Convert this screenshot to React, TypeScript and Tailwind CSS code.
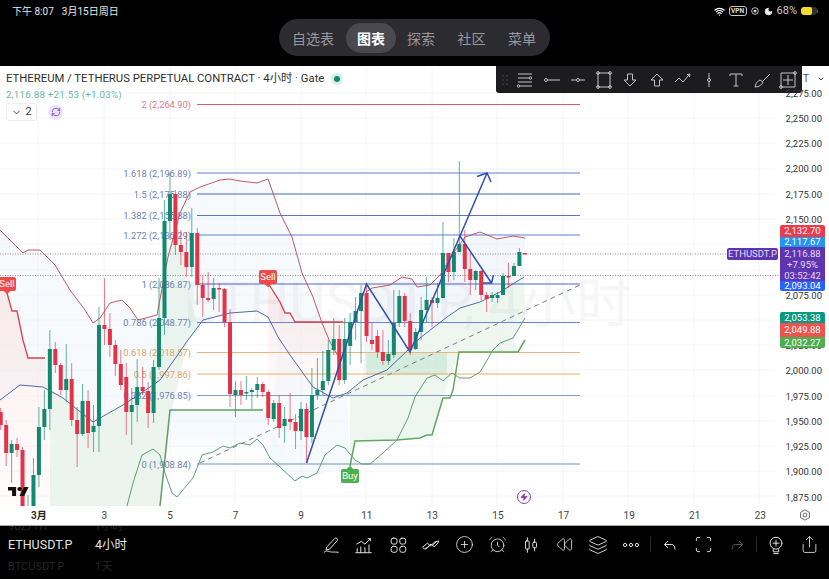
import { AlarmClock, ChevronDown, CirclePlus, Layers, Moon, RefreshCw, Rewind, Scan, Share, Wifi, Zap } from 'lucide-react'

type Candle = [number, number, number, number, 'g' | 'r']

// body top, body bottom, high, low (all in page pixels)
const candles: Candle[] = [
  [412, 425, 408, 430, 'r'], [425, 453, 420, 466, 'r'], [444, 453, 440, 483, 'g'], [444, 450, 438, 457, 'r'],
  [450, 512, 447, 512, 'r'], [510, 512, 495, 512, 'g'], [475, 512, 458, 512, 'g'], [427, 475, 407, 487, 'g'],
  [409, 427, 390, 440, 'g'], [349, 409, 330, 430, 'g'], [349, 365, 342, 373, 'r'], [365, 390, 363, 395, 'r'],
  [379, 390, 344, 402, 'g'], [379, 420, 363, 426, 'r'], [420, 434, 407, 467, 'r'], [401, 434, 384, 436, 'g'],
  [401, 433, 390, 448, 'r'], [426, 432, 405, 452, 'g'], [325, 426, 307, 452, 'g'], [325, 329, 278, 345, 'r'],
  [329, 345, 313, 357, 'r'], [345, 364, 340, 376, 'r'], [364, 385, 350, 390, 'r'], [377, 412, 363, 435, 'r'],
  [405, 412, 388, 445, 'g'], [387, 405, 359, 422, 'g'], [387, 391, 367, 395, 'r'], [391, 413, 382, 428, 'r'],
  [367, 413, 360, 423, 'g'], [318, 367, 278, 370, 'g'], [221, 318, 200, 335, 'g'], [194, 221, 173, 240, 'g'],
  [194, 245, 190, 255, 'r'], [245, 252, 230, 265, 'r'], [252, 267, 232, 277, 'r'], [233, 267, 208, 277, 'g'],
  [233, 285, 228, 305, 'r'], [285, 298, 275, 317, 'r'], [298, 300, 272, 302, 'r'], [288, 299, 278, 310, 'g'],
  [288, 289, 283, 312, 'r'], [289, 322, 288, 327, 'r'], [322, 394, 309, 407, 'r'], [390, 395, 381, 417, 'g'],
  [390, 395, 381, 405, 'r'], [392, 393, 376, 400, 'g'], [390, 392, 388, 409, 'g'], [384, 390, 377, 398, 'g'],
  [384, 392, 382, 397, 'r'], [392, 418, 390, 425, 'r'], [403, 419, 400, 422, 'g'], [403, 428, 395, 438, 'r'],
  [419, 426, 407, 443, 'g'], [419, 422, 393, 430, 'r'], [422, 431, 414, 449, 'r'], [409, 431, 402, 440, 'g'],
  [409, 437, 403, 463, 'r'], [395, 437, 368, 443, 'g'], [390, 395, 358, 400, 'g'], [381, 390, 351, 395, 'g'],
  [350, 381, 340, 385, 'g'], [339, 350, 318, 355, 'g'], [339, 380, 325, 385, 'r'], [339, 380, 318, 384, 'g'],
  [322, 346, 313, 365, 'g'], [311, 322, 297, 340, 'g'], [293, 311, 285, 363, 'g'], [293, 336, 285, 342, 'r'],
  [340, 344, 323, 350, 'r'], [336, 352, 330, 358, 'r'], [352, 361, 330, 365, 'r'], [354, 361, 340, 365, 'g'],
  [323, 355, 290, 358, 'g'], [296, 323, 290, 327, 'g'], [296, 321, 293, 327, 'r'], [321, 350, 313, 355, 'r'],
  [332, 349, 328, 350, 'g'], [310, 332, 297, 340, 'g'], [300, 310, 277, 323, 'g'], [300, 303, 297, 327, 'r'],
  [298, 303, 283, 308, 'g'], [253, 298, 222, 298, 'g'], [253, 272, 253, 282, 'r'], [252, 272, 238, 280, 'g'],
  [244, 252, 161, 252, 'g'], [244, 269, 230, 282, 'r'], [269, 280, 253, 295, 'r'], [271, 280, 270, 290, 'g'],
  [271, 295, 270, 300, 'r'], [295, 299, 292, 312, 'r'], [295, 298, 292, 302, 'g'], [295, 298, 292, 303, 'g'],
  [276, 295, 273, 295, 'g'], [276, 277, 263, 288, 'r'], [266, 276, 263, 276, 'g'], [252, 266, 248, 266, 'g'],
  [253, 254, 253, 254, 'r'],
]

const upperA = '0,230 10,240 23,253 28,250 40,250 55,265 70,290 85,310 93,323 100,318 110,303 122,300 130,308 138,320 157,315 168,257 180,213 190,192 200,187 220,180 230,179 240,181 257,183 268,179 273,193 280,213 292,237 302,273 313,297 322,323 330,342 338,356'
const upperB = '366,292 372,288 390,285 402,277 412,279 417,287 430,285 440,275 452,255 465,237 480,232 497,239 513,236 525,238'
const middle = '0,400 20,385 43,387 63,398 93,422 123,405 150,387 160,380 188,340 203,320 230,313 257,311 268,317 278,337 290,355 313,387 333,398 347,393 363,380 387,370 408,350 420,338 447,317 460,308 480,302 500,292 524,277'
const lower = '127,506 133,483 142,455 153,449 160,455 165,473 172,493 177,497 187,485 193,478 202,455 213,452 223,446 230,448 240,443 250,445 257,439 263,445 270,458 280,467 295,481 302,476 307,478 317,473 325,455 337,445 345,448 355,460 362,464 370,464 383,453 397,440 408,418 415,397 427,378 435,375 443,381 452,373 460,378 470,378 480,372 493,350 500,343 513,338 525,318'

const fibs = [
  { y: 173, label: '1.618 (2,196.89)', color: '#5f7fd6', text: '#6d7fb5' },
  { y: 194, label: '1.5 (2,175.88)', color: '#4c69c4', text: '#6d7fb5' },
  { y: 215.5, label: '1.382 (2,155.88)', color: '#6074ba', text: '#6d7fb5' },
  { y: 235, label: '1.272 (2,136.29)', color: '#5f7fd6', text: '#6d7fb5' },
  { y: 284, label: '1 (2,086.87)', color: '#4c69c4', text: '#6d7fb5' },
  { y: 322.5, label: '0.786 (2,048.77)', color: '#6a86d8', text: '#6d7fb5' },
  { y: 352.5, label: '0.618 (2,018.57)', color: '#efb27a', text: '#d9a669' },
  { y: 374, label: '0.5 (1,997.86)', color: '#eeaa6a', text: '#d9a669' },
  { y: 395.5, label: '0.382 (1,976.85)', color: '#83a0ba', text: '#6d7fb5' },
  { y: 464, label: '0 (1,908.84)', color: '#6f93b8', text: '#6d7fb5' },
]

const gridX = [38, 104, 170, 235, 301, 366, 432, 497, 563, 628, 694, 759]
const gridY = [93, 118, 143, 169, 194, 219, 244, 270, 295, 320, 345, 370, 396, 421, 446, 471, 496]

const priceLabels = ['2,275.00', '2,250.00', '2,225.00', '2,200.00', '2,175.00', '2,150.00', '', '', '2,075.00', '', '2,025.00', '2,000.00', '1,975.00', '1,950.00', '1,925.00', '1,900.00', '1,875.00']
const timeLabels = ['3月', '3', '5', '7', '9', '11', '13', '15', '17', '19', '21', '23']

function ChartDrawing() {
  return (
    <svg viewBox="0 66 829 440" className="block w-[829px] h-[440px]">
      <defs>
        <linearGradient id="pinkFade" x1="0" y1="0" x2="0" y2="1">
          <stop offset="0" stopColor="#fbdcdc" stopOpacity="0.6" />
          <stop offset="1" stopColor="#fbe4e4" stopOpacity="0.1" />
        </linearGradient>
        <linearGradient id="blueFade" x1="0" y1="0" x2="0" y2="1">
          <stop offset="0" stopColor="#e6f0fa" stopOpacity="0.5" />
          <stop offset="1" stopColor="#e6f0fa" stopOpacity="0" />
        </linearGradient>
      </defs>

      {/* band fills */}
      <polygon points={`${upperA} 290,355 268,317 257,311 230,313 203,320 188,340 160,380 150,387 123,405 93,422 63,398 43,387 20,385 0,400`} fill="#eef5fb" opacity="0.5" />
      <polygon points={`${upperB} 524,277 500,292 480,302 460,308 447,317 420,338 408,350 387,370 363,380`} fill="#eef4fb" opacity="0.7" />
      <polygon points="290,355 313,387 333,398 347,393 350,466 307,478 295,481 280,467 270,458 278,337" fill="#eef5fb" opacity="0.55" />
      <polygon points="170,410 263,410 290,470 170,470" fill="url(#blueFade)" />

      {/* supertrend fills */}
      <polygon points="0,282 7,293 12,311 17,311 23,340 28,358 45,358 50,506 0,506" fill="url(#pinkFade)" />
      <polygon points="268,283 280,300 285,313 290,313 295,322 343,322 343,395 333,398 313,387 290,400 268,400" fill="url(#pinkFade)" />
      <polygon points="50,388 63,398 93,422 123,405 150,387 155,340 165,250 180,235 190,300 200,330 188,340 172,410 160,506 50,506" fill="#e6f3ea" opacity="0.8" />
      <polygon points="350,398 347,393 363,380 387,370 408,350 420,338 447,317 460,308 480,302 500,292 524,277 525,318 513,338 518,352 459,352 443,398 432,435 397,440 355,441 350,466" fill="#e6f3ea" opacity="0.7" />
      <rect x="366" y="352" width="81" height="23" fill="#d2ead9" opacity="0.9" />

      {/* watermark */}
      <text x="632" y="322" textAnchor="end" fontSize="56" fill="#1f2937" opacity="0.035">ETHUSDT.P, 4小时</text>

      {gridX.map((x) => <line key={x} x1={x} x2={x} y1="66" y2="506" stroke="#eef0f3" strokeOpacity="0.7" />)}
      {gridY.map((y) => <line key={y} x1="0" x2="775" y1={y} y2={y} stroke="#eef0f3" strokeOpacity="0.7" />)}

      {/* last price lines */}
      <line x1="0" x2="727" y1="254" y2="254" stroke="#8a8f99" strokeDasharray="1 1.5" />
      <line x1="0" x2="780" y1="275.5" y2="275.5" stroke="#8a8f99" strokeDasharray="1 1.5" />

      {/* fib levels */}
      <line x1="197" x2="580" y1="104.5" y2="104.5" stroke="#e0566e" strokeWidth="1.2" />
      <text x="191" y="108" textAnchor="end" fontSize="9.3" fill="#dc7a8a">2 (2,264.90)</text>
      {fibs.map((f) => (
        <g key={f.y}>
          <line x1="197" x2="580" y1={f.y} y2={f.y} stroke={f.color} strokeWidth="1.2" />
          <text x="191" y={f.y + 3.5} textAnchor="end" fontSize="9.3" fill={f.text}>{f.label}</text>
        </g>
      ))}

      {/* trend line */}
      <line x1="200" y1="463" x2="580" y2="285" stroke="#7c818a" strokeWidth="1" strokeDasharray="5 4" />

      {/* bands and stops */}
      <polyline points={upperA} fill="none" stroke="#b8474f" strokeWidth="0.9" />
      <polyline points={upperB} fill="none" stroke="#b8474f" strokeWidth="0.9" />
      <polyline points={middle} fill="none" stroke="#3d5a9e" strokeWidth="0.9" />
      <polyline points={lower} fill="none" stroke="#4f9265" strokeWidth="0.9" />
      <polyline points="7,293 12,311 17,311 23,340 28,358 45,358" fill="none" stroke="#d9414f" strokeWidth="1.3" />
      <polyline points="268,283 280,302 285,313 290,313 295,322 343,322" fill="none" stroke="#d9414f" strokeWidth="1.3" />
      <polyline points="160,506 170,410 263,410" fill="none" stroke="#5f9e67" strokeWidth="1.5" />
      <polyline points="350,466 355,441 397,440 420,438 427,435 432,435 443,398 450,398 453,390 459,352 518,352 525,340" fill="none" stroke="#5fa860" strokeWidth="1.5" />

      {candles.map(([top, bottom, hi, lo, side], i) => {
        const x = 0.7 + 5.46 * i
        const color = side === 'g' ? '#12896f' : '#e23348'
        return (
          <g key={i}>
            <line x1={x} x2={x} y1={hi} y2={lo} stroke={color} strokeOpacity="0.65" />
            <rect x={x - 2} y={top} width="4" height={Math.max(bottom - top, 1.5)} fill={color} />
          </g>
        )
      })}

      {/* hand drawn arrows */}
      <polyline points="306.5,463 366.5,284 410,352 460,236 491.5,283" fill="none" stroke="#2f4fb0" strokeWidth="1.5" />
      <polyline points="483,283 491.5,283 493.5,275" fill="none" stroke="#2f4fb0" strokeWidth="1.5" />
      <polyline points="460,236 487,173" fill="none" stroke="#2f4fb0" strokeWidth="1.5" />
      <polyline points="477,176.5 487,173 491,182" fill="none" stroke="#2f4fb0" strokeWidth="1.5" />

      {/* tradingview mark */}
      <g transform="translate(8 485) scale(0.58 0.5)" fill="#111">
        <path d="M14 22H7V11H0V4h14v18zM28 22h-8l7.5-18h8L28 22z" />
        <circle cx="20" cy="8" r="4" />
      </g>
    </svg>
  )
}

function ToolbarIcons() {
  const cls = 'w-[20px] h-[20px] shrink-0'
  const s = { fill: 'none', stroke: '#c4c4c4', strokeWidth: 1 }
  return (
    <>
      <svg viewBox="0 0 8 20" className="w-[8px] h-[20px] shrink-0"><g fill="#4b4b4b"><circle cx="2" cy="6" r="0.8" /><circle cx="6" cy="6" r="0.8" /><circle cx="2" cy="10" r="0.8" /><circle cx="6" cy="10" r="0.8" /><circle cx="2" cy="14" r="0.8" /><circle cx="6" cy="14" r="0.8" /></g></svg>
      <svg viewBox="0 0 20 20" className={cls} {...s}><path d="M3 4h14M3 8h11M3 12h14M5 16h12" /><circle cx="15.500" cy="8" r="1.200" /><circle cx="3.500" cy="16" r="1.200" /></svg>
      <svg viewBox="0 0 20 20" className={cls} {...s}><circle cx="4" cy="10" r="1.500" /><path d="M5.500 10H18" /></svg>
      <svg viewBox="0 0 20 20" className={cls} {...s}><circle cx="10" cy="10" r="1.500" /><path d="M3 10h5.500M11.500 10H17" /></svg>
      <svg viewBox="0 0 20 20" className={cls} {...s}><path d="M4 3h12v14H4z" /><circle cx="4" cy="3" r="1.400" /><circle cx="16" cy="3" r="1.400" /><circle cx="4" cy="17" r="1.400" /><circle cx="16" cy="17" r="1.400" /></svg>
      <svg viewBox="0 0 20 20" className={cls} {...s}><path d="M7.500 4h5v6h3.500l-6 6-6-6h3.500z" /></svg>
      <svg viewBox="0 0 20 20" className={cls} {...s}><path d="M7.500 16h5v-6h3.500l-6-6-6 6h3.500z" /></svg>
      <svg viewBox="0 0 20 20" className={cls} {...s}><path d="M2 12l4-4 4 4 6-7M14 4.500l3-.5-.5 3" /></svg>
      <svg viewBox="0 0 20 20" className={cls} {...s}><path d="M10 3v5.500M10 11.500V17" /><circle cx="10" cy="10" r="1.500" /></svg>
      <svg viewBox="0 0 20 20" className={cls} {...s}><path d="M4 6V4h12v2M10 4v12M7.500 16h5" /></svg>
      <svg viewBox="0 0 20 20" className={cls} {...s}><path d="M3 17c1-3 1-5 5-7l3 2c-1 3-4 5-8 5zM11 11l7-7" /></svg>
      <svg viewBox="0 0 20 20" className={cls} {...s}><path d="M3 3h14v14H3zM10 5v10M5 10h10" /><circle cx="3" cy="17" r="1.400" /><circle cx="17" cy="3" r="1.400" /></svg>
    </>
  )
}

function BottomIcon({ children }: { children: React.ReactNode }) {
  return <div className="w-[33.3px] flex items-center justify-center text-[#e2e2e2]">{children}</div>
}

function Glyph({ children, dim }: { children: React.ReactNode; dim?: boolean }) {
  return (
    <svg viewBox="0 0 22 22" fill="none" stroke={dim ? '#5a5a5a' : 'currentColor'} strokeWidth="1.1" strokeLinecap="round" strokeLinejoin="round" className="w-[20px] h-[20px]">
      {children}
    </svg>
  )
}

function SignalTag({ label, tone, pointer, className }: { label: string; tone: string; pointer: 'up' | 'down'; className: string }) {
  return (
    <div className={`absolute w-[18px] h-[14px] rounded-[2px] text-[9.5px] leading-[14px] text-center text-white ${tone} ${className}`}>
      <span className={`absolute left-[6px] w-[6px] h-[6px] rotate-45 ${tone} ${pointer === 'up' ? 'top-[-2px]' : 'bottom-[-2px]'}`} />
      <span className="relative">{label}</span>
    </div>
  )
}

export default function App() {
  return (
    <div className="w-[829px] h-[579px] flex flex-col overflow-hidden bg-black font-[Roboto,'Noto_Sans_CJK_SC',sans-serif]">
      {/* ipad status bar and tabs */}
      <div className="h-[66px] shrink-0 relative">
        <div className="flex items-center justify-between h-[22px] pl-[12px] pr-[11px] text-[10px] text-[#e8e8e8]">
          <div className="flex gap-[8px]">
            <span>下午 8:07</span>
            <span>3月15日周日</span>
          </div>
          <div className="flex items-center">
            <Wifi size={11} strokeWidth={2.6} className="text-white" />
            <span className="ml-[4px] w-[18px] text-center border border-[#c8c8c8] rounded-[3px] text-[6.5px] font-semibold leading-[8px]">VPN</span>
            <svg viewBox="0 0 12 12" className="ml-[4px] w-[8px] h-[8px]"><circle cx="6" cy="6" r="5" fill="none" stroke="#ddd" strokeWidth="1.300" /><rect x="4" y="4.500" width="4" height="3.500" fill="#ddd" /></svg>
            <Moon size={9} fill="#eee" className="ml-[5px] text-[#eee]" />
            <span className="ml-[4px] text-[11px] text-[#cfcfcf]">68%</span>
            <div className="ml-[4px] flex items-center">
              <div className="w-[16px] h-[8px] rounded-[3px] bg-[#2f2f2f] overflow-hidden">
                <div className="h-full w-[68%] bg-[#f4d92e] rounded-[2px]" />
              </div>
              <div className="w-[1px] h-[3px] bg-[#555]" />
            </div>
          </div>
        </div>
        <div className="absolute left-[279px] top-[19px] w-[271px] h-[37px] rounded-full bg-[#2b2b30] flex items-center pl-[4px] pt-[1px] text-[14px] leading-[20px] text-[#98989d]">
          <span className="w-[63px] text-center pr-[3px] pt-[1px]">自选表</span>
          <span className="w-[50px] h-[30px] rounded-full bg-[#4a4a4e] text-white font-semibold flex items-center justify-center pt-[1px]">图表</span>
          <span className="w-[50px] text-center pt-[1px]">探索</span>
          <span className="w-[51px] text-center pt-[1px]">社区</span>
          <span className="w-[50px] text-center pt-[1px]">菜单</span>
        </div>
      </div>

      {/* chart */}
      <div className="relative bg-white h-[440px] shrink-0 overflow-hidden">
        <ChartDrawing />

        <div className="absolute left-[6px] top-[5px]">
          <div className="flex items-center text-[11.3px] leading-[15px] text-[#2f2f2f]">
            <span>ETHEREUM / TETHERUS PERPETUAL CONTRACT · 4小时 · Gate</span>
            <span className="ml-[7px] w-[12px] h-[12px] rounded-full bg-[#d9efe9] flex items-center justify-center">
              <span className="w-[6px] h-[6px] rounded-full bg-[#12896f]" />
            </span>
          </div>
          <div className="mt-[2px] text-[9.8px] leading-[13px] text-[#68b8a4] tracking-[0.2px]">2,116.88 +21.53 (+1.03%)</div>
          <div className="mt-[2px] flex items-center gap-[11px]">
            <div className="w-[31px] h-[18px] border border-[#eceef1] rounded-[3px] bg-white flex items-center justify-center gap-[3px] text-[11px] text-[#333]">
              <ChevronDown size={11} />
              <span>2</span>
            </div>
            <div className="w-[15px] h-[15px] rounded-full bg-[#ece4f8] flex items-center justify-center">
              <RefreshCw size={10} strokeWidth={2} className="text-[#7a3fd0]" />
            </div>
          </div>
        </div>

        {/* drawing toolbar */}
        <div className="absolute left-[496px] top-0 w-[306px] h-[27px] bg-[#1c1c1e] rounded-b-[3px] flex items-center gap-[6.3px] pl-[5px]">
          <ToolbarIcons />
        </div>
        <div className="absolute left-[803px] top-[5px] w-[22px] flex items-center justify-between text-[10px] text-[#444]">
          <span>T</span>
          <ChevronDown size={8} strokeWidth={3} />
        </div>

        {/* price axis */}
        <div className="absolute top-[14.500px] right-[7px] flex flex-col items-end text-[9.5px] leading-[25.25px] text-[#333]">
          {priceLabels.map((p, i) => <span key={i} className="h-[25.25px]">{p}</span>)}
        </div>

        {/* price tags */}
        <div className="absolute left-[780px] top-[159px] w-[45px] text-center text-[9.5px] text-white leading-[11px]">
          <div className="bg-[#ee3a4c] h-[12px] rounded-t-[2px]">2,132.70</div>
          <div className="bg-[#2196f3] h-[10px] leading-[10px]">2,117.67</div>
          <div className="bg-[#5e35b1] h-[34px] text-[#e4daf7] pt-[1px]">
            <div>2,116.88</div>
            <div>+7.95%</div>
            <div>03:52:42</div>
          </div>
          <div className="bg-[#2962ff] h-[10px] leading-[10px] rounded-b-[2px]">2,093.04</div>
        </div>
        <div className="absolute left-[780px] top-[246px] w-[45px] text-center text-[9.5px] text-white leading-[11px]">
          <div className="bg-[#089981] h-[11px] rounded-t-[2px]">2,053.38</div>
          <div className="bg-[#ef5350] h-[14px] leading-[14px]">2,049.88</div>
          <div className="bg-[#4caf50] h-[11px] rounded-b-[2px]">2,032.27</div>
        </div>
        <div className="absolute left-[727px] top-[182px] w-[51px] h-[12px] rounded-[2px] bg-[#5e35b1] text-[9.5px] leading-[12px] text-center text-[#e4daf7]">ETHUSDT.P</div>

        {/* signal tags */}
        <SignalTag label="Sell" tone="bg-[#ef4a4a]" pointer="down" className="left-[-2px] top-[211px]" />
        <SignalTag label="Sell" tone="bg-[#ef4a4a]" pointer="down" className="left-[259px] top-[204px]" />
        <SignalTag label="Buy" tone="bg-[#4caf50]" pointer="up" className="left-[341px] top-[403px]" />

        <div className="absolute left-[517px] top-[424px] w-[14px] h-[14px] rounded-full border border-[#8a3fa8] flex items-center justify-center">
          <Zap size={8} fill="#8a3fa8" className="text-[#8a3fa8]" />
        </div>
      </div>

      {/* time axis */}
      <div className="relative h-[19px] shrink-0 bg-white flex items-center pl-[6px] text-[10px] text-[#444]">
        {timeLabels.map((t, i) => (
          <span key={t + i} className={`w-[65.6px] shrink-0 text-center ${i === 0 ? 'font-semibold text-[#222]' : ''}`}>{t}</span>
        ))}
        <svg viewBox="0 0 14 14" fill="none" stroke="#555" strokeWidth="1" className="absolute left-[799px] top-[3px] w-[12px] h-[12px]">
          <path d="M7 1l5.200 3v6L7 13l-5.200-3V4z" />
          <circle cx="7" cy="7" r="2.200" />
        </svg>
      </div>

      {/* bottom bar */}
      <div className="flex-1 border-t border-[#a8a8a8] relative flex items-center justify-end pr-[3px] pb-[16px]">
        <div className="absolute left-[8px] top-0 h-full flex flex-col leading-none">
          <div className="h-[6px] overflow-hidden text-[11px] text-[#2a2a2a] flex items-end">
            <span className="w-[87px]">9027TH</span><span>1小时</span>
          </div>
          <div className="mt-[7px] flex text-[12.5px] text-[#e4e4e4]">
            <span className="w-[87px]">ETHUSDT.P</span>
            <span>4小时</span>
          </div>
          <div className="mt-[9px] flex text-[11px] text-[#262626]">
            <span className="w-[87px]">BTCUSDT.P</span>
            <span>1天</span>
          </div>
        </div>

        <BottomIcon><Glyph><path d="M6.500 13L15 4a1.800 1.800 0 0 1 2.800 2.300L9.500 15.500 6 16.500zM3.500 19c2.500-2.500 4.500-1 6.500-.5s4 0 9 .5" /></Glyph></BottomIcon>
        <BottomIcon><Glyph><path d="M3 10l5-3 4 3 6-6M15.500 4H18v2.500M3.500 15v4M7.500 13v6M12 14v5M16.500 11v8M2 19.500h17" /></Glyph></BottomIcon>
        <BottomIcon><Glyph><rect x="3.500" y="3.500" width="6.500" height="6.500" rx="2.200" /><rect x="13" y="3.500" width="6.500" height="6.500" rx="2.200" /><rect x="3.500" y="12.500" width="6.500" height="6.500" rx="2.200" /><rect x="13" y="12.500" width="6.500" height="6.500" rx="2.200" /></Glyph></BottomIcon>
        <BottomIcon><Glyph><path d="M2 13l5-4 3.500 3 4-4 5-1.500-1 2.500-4 4-3.500-3-4.500 4-2.500 1zM5 15.500l5-4M12 12l5-5" /></Glyph></BottomIcon>
        <BottomIcon><CirclePlus size={19} strokeWidth={1.1} /></BottomIcon>
        <BottomIcon><AlarmClock size={19} strokeWidth={1.1} /></BottomIcon>
        <BottomIcon><Glyph><rect x="5" y="6.500" width="4" height="9" rx="1" /><path d="M7 3v3.500M7 15.500V19M15 4.500V8M15 14v3.500" /><rect x="13" y="8" width="4" height="6" rx="1" /></Glyph></BottomIcon>
        <BottomIcon><Rewind size={17} strokeWidth={1.2} /></BottomIcon>
        <BottomIcon><Layers size={20} strokeWidth={1.1} /></BottomIcon>
        <BottomIcon><Glyph><circle cx="4.500" cy="11" r="1.800" /><circle cx="11" cy="11" r="1.800" /><circle cx="17.500" cy="11" r="1.800" /></Glyph></BottomIcon>
        <div className="w-[6px] flex justify-center"><div className="w-px h-[15px] bg-[#2c2c2c]" /></div>
        <BottomIcon><Glyph><path d="M8.500 7L5 10.500 8.500 14M5 10.500h8c2 0 3 1.500 3.500 5" /></Glyph></BottomIcon>
        <BottomIcon><Scan size={19} strokeWidth={1.2} /></BottomIcon>
        <BottomIcon><Glyph dim><path d="M13.500 7L17 10.500 13.500 14M17 10.500H9c-2 0-3 1.500-3.500 5" /></Glyph></BottomIcon>
        <div className="w-[6px] flex justify-center"><div className="w-px h-[15px] bg-[#2c2c2c]" /></div>
        <BottomIcon><Glyph><circle cx="11" cy="9" r="6.500" /><path d="M11 5.800v6.400M7.800 9h6.400M8 15.500v3h6v-3M8.500 20.500h5" /></Glyph></BottomIcon>
        <BottomIcon><Share size={19} strokeWidth={1.1} /></BottomIcon>
      </div>
    </div>
  )
}
